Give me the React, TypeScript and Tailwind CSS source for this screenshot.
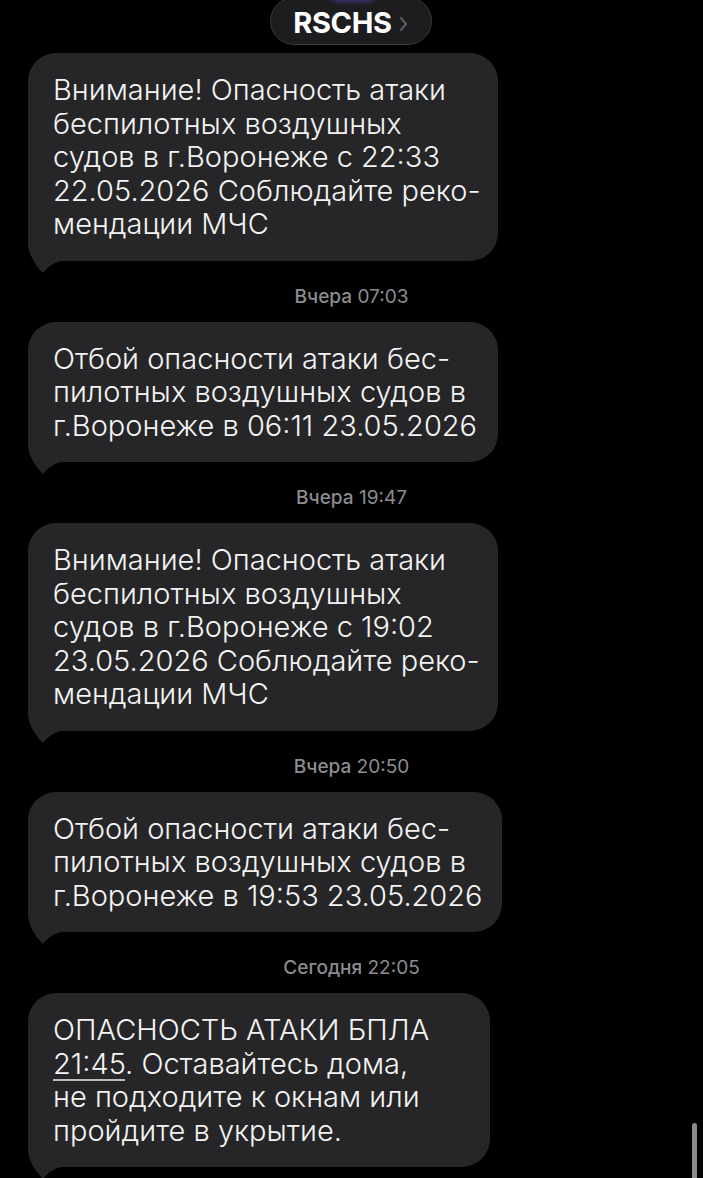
import React from "react";

const font = { fontFamily: "Inter, 'Noto Sans', 'Liberation Sans', sans-serif" };

function Tail() {
  return (
    <svg
      className="absolute left-0 bottom-[-12px]"
      width="40"
      height="42"
      viewBox="0 0 40 42"
      fill="#262628"
    >
      <path d="M0 0 V14 C1 24 7 34 15 42 C20 36 26 31 34 30 L40 30 V0 Z" />
    </svg>
  );
}

function Bubble({ width, children }: { width: string; children: React.ReactNode }) {
  return (
    <div className={`relative ml-[28px] ${width}`}>
      <Tail />
      <div className="relative rounded-[28px] bg-[#262628] px-[25px] py-[20px] text-[29px] font-[350] leading-[33.5px] text-[#f4f4f4] whitespace-nowrap tracking-[0px]">
        {children}
      </div>
    </div>
  );
}

function Stamp({ day, time }: { day: string; time: string }) {
  return (
    <div className="flex justify-center pt-[25px] pb-[14px] text-[19px] leading-[22px] text-[#8c8c91]">
      <span className="font-medium">{day}</span>
      <span>&nbsp;{time}</span>
    </div>
  );
}

export default function App() {
  return (
    <div className="relative w-[703px] h-[1178px] overflow-hidden bg-black" style={font}>
      {/* header pill */}
      <div className="flex justify-center">
        <div className="relative -mt-[3px] ml-[-2px] flex h-[48px] w-[162px] items-center justify-center gap-[7px] overflow-hidden rounded-full border border-[#38383c] bg-[#1d1d20] pt-[3px]">
          <div className="absolute left-[60px] top-[-10px] h-[14px] w-[44px] rounded-full bg-[#3b3570] blur-[2px]" />
          <span className="text-[29px] font-bold tracking-[-0.3px] text-white">RSCHS</span>
          <svg width="9" height="16" viewBox="0 0 9 16" className="mt-[3px]">
            <path d="M2 2 L7 8 L2 14" stroke="#5c5c61" strokeWidth="2.2" fill="none" strokeLinecap="round" strokeLinejoin="round" />
          </svg>
        </div>
      </div>

      <div className="flex flex-col pt-[8px]">
        <Bubble width="w-[470px]">
          Внимание! Опасность атаки
          <br />
          беспилотных воздушных
          <br />
          судов в г.Воронеже с 22:33
          <br />
          22.05.2026 Соблюдайте реко-
          <br />
          мендации МЧС
        </Bubble>
        <Stamp day="Вчера" time="07:03" />
        <Bubble width="w-[470px]">
          Отбой опасности атаки бес-
          <br />
          пилотных воздушных судов в
          <br />
          г.Воронеже в 06:11 23.05.2026
        </Bubble>
        <Stamp day="Вчера" time="19:47" />
        <Bubble width="w-[470px]">
          Внимание! Опасность атаки
          <br />
          беспилотных воздушных
          <br />
          судов в г.Воронеже с 19:02
          <br />
          23.05.2026 Соблюдайте реко-
          <br />
          мендации МЧС
        </Bubble>
        <Stamp day="Вчера" time="20:50" />
        <Bubble width="w-[474px]">
          Отбой опасности атаки бес-
          <br />
          пилотных воздушных судов в
          <br />
          г.Воронеже в 19:53 23.05.2026
        </Bubble>
        <Stamp day="Сегодня" time="22:05" />
        <Bubble width="w-[462px]">
          ОПАСНОСТЬ АТАКИ БПЛА
          <br />
          <span className="underline decoration-[#bdbdbd] decoration-[1.5px] underline-offset-[5px]">21:45</span>. Оставайтесь дома,
          <br />
          не подходите к окнам или
          <br />
          пройдите в укрытие.
        </Bubble>
      </div>

      {/* scrollbar */}
      <div className="absolute left-[692px] top-[1123px] h-[70px] w-[5px] rounded-full bg-[#8a8a8a]" />
    </div>
  );
}
